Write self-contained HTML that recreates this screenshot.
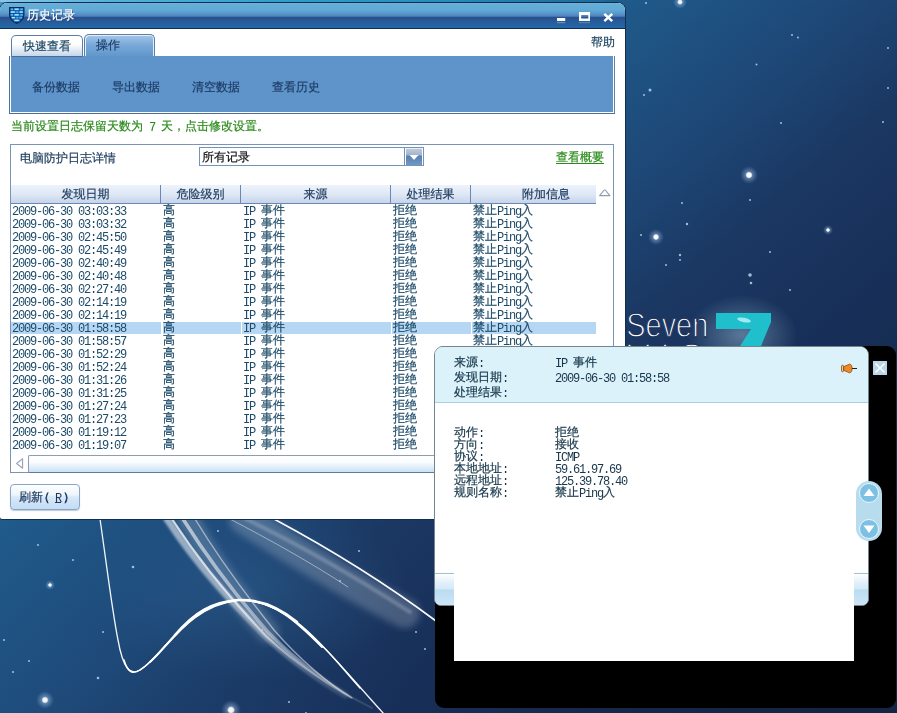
<!DOCTYPE html>
<html lang="zh-CN">
<head>
<meta charset="utf-8">
<title>历史记录</title>
<style>
html,body{margin:0;padding:0;}
body{width:897px;height:713px;overflow:hidden;position:relative;background:#1d4a78;font-family:"Liberation Sans","WenQuanYi Zen Hei","Noto Sans CJK SC",sans-serif;font-size:12px;line-height:13px;color:#1c4560;-webkit-text-stroke:0.2px;}
div,span{position:absolute;white-space:nowrap;}
#bg{left:0;top:0;width:897px;height:713px;background:radial-gradient(ellipse 420px 330px at 0% 100%,rgba(34,96,146,.28),rgba(34,96,146,0) 100%),radial-gradient(ellipse 160px 90px at 250px 590px,rgba(60,120,170,.28),rgba(60,120,170,0) 100%),linear-gradient(140deg,#4a90c0 0%,#2a6a9c 20%,#1f5a8a 36%,#1d4473 51%,#1b3863 58%,#172f58 70%,#15284a 84%,#142442 100%);}
/* ---------- main window ---------- */
#frame{left:-1px;top:2px;width:625px;height:516px;background:#fff;border:1px solid #102e50;border-radius:8px 8px 3px 3px;overflow:hidden;}
#title{left:0;top:3px;width:625px;height:25px;background:linear-gradient(#7ab4dc 0,#66aed8 1px,#60aad6 7px,#5a9acc 10px,#4f80b9 13.4px,#27508e 13.8px,#285a98 18px,#2268a8 25px);border-bottom:1px solid #102e50;border-radius:7px 7px 0 0;}
#title .t{left:27px;top:5px;color:#fff;font-size:12px;line-height:14px;text-shadow:1px 1px 0 rgba(16,48,96,.55);}
.m{position:relative;top:1px;-webkit-text-stroke:0;font-family:"Liberation Mono",monospace;letter-spacing:-1.2px;}
.tab{border:1px solid #5a7ea8;border-bottom:none;border-radius:5px 5px 0 0;line-height:20px;text-align:center;}
#tab1{left:11px;top:35px;width:70px;height:20px;z-index:2;border-bottom:1px solid #4b6e98;background:linear-gradient(#fff 0,#fff 8px,#c4d6ea 100%);color:#1c4560;}
#tab2{left:84px;top:34px;width:69px;height:23px;background:linear-gradient(#a6c6e8 0,#78a8d8 10px,#5e94ca 100%);color:#1c3f68;box-shadow:inset 1px 1px 0 #e4eef8,inset -1px 0 0 #e4eef8;text-align:left;text-indent:11px;}
#panel{left:9px;top:56px;width:602px;height:56px;border:1px solid #fff;border-top:none;box-shadow:-1px 0 0 #4b6e98,1px 0 0 #5f83ad,0 1px 0 #4b6e98,-1px 1px 0 #4b6e98,1px 1px 0 #4b6e98;margin:0 1px;background:#5e94ca;}
#panel>span{top:25px;color:#1e3d66;}
#help{left:591px;top:36px;}
#green{left:11px;top:120px;color:#2a8a1a;}
#grp{left:10px;top:144px;width:602px;height:380px;border:1px solid #7a94b4;border-bottom:none;}
#grpt{left:20px;top:152px;color:#1c3a5c;}
#combo{left:199px;top:147px;width:223px;height:17px;border:1px solid #7393b8;background:#fff;}
#combo>span{left:2px;top:3px;color:#111;}
#cbtn{left:204px;top:0;width:18px;height:17px;border-left:1px solid #6f8fb4;box-shadow:inset 1px 0 0 #fff,inset -1px 0 0 #fff,inset 0 1px 0 #e8eef6;background:linear-gradient(#c4cddc 0,#a2b4cd 7px,#5a80b0 8px,#7096c2 17px);}
#link{left:556px;top:151px;color:#2a8a1a;text-decoration:underline;text-underline-offset:2px;text-decoration-thickness:1px;}
#hdr{left:11px;top:185px;width:585px;height:18px;overflow:hidden;background:linear-gradient(#eef3fb,#dfe8f6 50%,#c6d4ea);border-bottom:1px solid #6a88b0;}
#hdr>span{top:3px;color:#1c3a5c;text-align:center;}
#hdr i{position:absolute;top:0;width:1px;height:19px;background:#6a88b0;}
.row{left:11px;width:585px;height:13px;color:#1c4a68;}
.row>span{top:0;line-height:13px;}
.c1{left:1px}.c2{left:152px}.c3{left:232px}.c4{left:382px}.c5{left:462px}
.sel b{position:absolute;top:1px;height:12px;background:#b5d7f3;}


#grp{height:327px;border-bottom:1px solid #7a94b4;}
#sth{left:28px;top:455px;width:600px;height:16px;border:1px solid #8f9db0;border-bottom-color:#5d7c9a;border-right:none;border-radius:2px 0 0 2px;background:linear-gradient(#fff 0,#fafcff 6px,#e2effb 11px,#cbe1f6 16px);}
#btn{left:10px;top:484px;width:68px;height:24px;border:1px solid #8aa6c6;border-radius:4px;background:linear-gradient(#fdfeff 0,#eef5fc 10px,#d8e8f8 12px,#c4dcf4 24px);box-shadow:0 1px 1px rgba(120,150,190,.5);}
#btn>span{left:8px;top:6px;color:#1c3a5c;}
#btn i{font-style:normal;display:inline-block;text-align:center;}
/* ---------- popup ---------- */
#black{left:435px;top:346px;width:461px;height:362px;background:#000;border-radius:9px;}
#white2{left:454px;top:590px;width:400px;height:71px;background:#fff;}
#pop{left:434px;top:346px;width:433px;height:258px;border:1px solid #76858c;border-radius:9px 9px 7px 7px;background:#fff;overflow:hidden;box-sizing:content-box;}
#pophd{left:0;top:0;width:433px;height:55px;background:#dbf2fb;border-bottom:1px solid #a9cfe0;}
#popft{left:0;top:226px;width:433px;height:32px;border-top:1px solid #9fbfd2;background:linear-gradient(#fff 0,#e4f1fa 8px,#d3e9f7 15px,#b9dcf2 16px,#cfe6f5 32px);}
#popin{left:19px;top:56px;width:400px;height:210px;background:#fff;}
.pt{color:#17364a;line-height:12px;}
#pill{left:856px;top:481px;width:26px;height:60px;border-radius:13px;background:#b7dcee;}
.cir{left:3px;width:18px;height:18px;border-radius:50%;border:1px solid #eaf6fc;background:#7cc0e4;}
#xbox{left:873px;top:361px;width:14px;height:14px;background:#b9d6e6;}
</style>
</head>
<body>
<div id="bg"><svg id="bgsvg" width="897" height="713" viewBox="0 0 897 713" style="position:absolute;left:0;top:0">
<defs>
<radialGradient id="gs"><stop offset="0" stop-color="#fff" stop-opacity="1"/><stop offset="0.25" stop-color="#fff" stop-opacity=".9"/><stop offset="0.4" stop-color="#cfe6ff" stop-opacity=".35"/><stop offset="1" stop-color="#9cc8f0" stop-opacity="0"/></radialGradient>
<radialGradient id="g7"><stop offset="0" stop-color="#8fb0c8" stop-opacity=".55"/><stop offset="1" stop-color="#8fb0c8" stop-opacity="0"/></radialGradient>
<linearGradient id="top2" x1="0" x2="1" y1="0" y2="0"><stop offset="0" stop-color="#84c6e8"/><stop offset=".12" stop-color="#58b0da"/><stop offset=".33" stop-color="#2e9ccc"/><stop offset=".5" stop-color="#2a8abc"/><stop offset=".67" stop-color="#1f6a9a"/><stop offset=".7" stop-color="#1f5e8e" stop-opacity="0"/></linearGradient>
<linearGradient id="band" x1="0" x2="1" y1="0" y2="1"><stop offset="0" stop-color="#fff" stop-opacity=".55"/><stop offset="1" stop-color="#fff" stop-opacity=".05"/></linearGradient>
<filter id="b1" x="-20%" y="-20%" width="140%" height="140%"><feGaussianBlur stdDeviation="1.2"/></filter><filter id="b3" x="-20%" y="-20%" width="140%" height="140%"><feGaussianBlur stdDeviation="3.5"/></filter><linearGradient id="fade" gradientUnits="userSpaceOnUse" x1="165" y1="519" x2="360" y2="705"><stop offset="0" stop-color="#fff" stop-opacity="1"/><stop offset=".45" stop-color="#fff" stop-opacity=".8"/><stop offset="1" stop-color="#fff" stop-opacity=".15"/></linearGradient></defs>
<rect x="0" y="0" width="897" height="2" fill="url(#top2)"/>
<g fill="none" stroke="#fff" stroke-linecap="round">
<path d="M100 519 C106 560 112 610 118 640 C123 668 130 676 140 670 C165 655 185 605 238 600 C290 598 330 655 384 714" stroke-width="1.3" opacity=".95"/>
<path d="M124 660 C128 674 134 674 140 670 C165 655 185 605 238 600 C290 598 330 655 360 688" stroke-width="1.5"/><path d="M150 662 C170 645 190 606 238 600 C275 599 300 625 322 647" stroke-width="2"/><path d="M175 635 C195 612 212 602 238 600 C260 599 280 608 297 622" stroke-width="2.5"/>
<path d="M167 519 C200 570 240 610 262 632 C290 660 320 680 345 695" stroke="url(#fade)" stroke-width="7" opacity=".55" filter="url(#b1)"/><path d="M188 519 C212 565 245 606 268 632" stroke-width="22" opacity=".18" filter="url(#b3)"/>
<path d="M172 519 C205 570 243 612 266 636 C300 668 340 692 372 708" stroke="url(#fade)" stroke-width="2.2" opacity=".75"/>
<path d="M183 519 C212 565 245 606 268 632 C295 660 325 682 350 697" stroke="url(#fade)" stroke-width="3.5" opacity=".6"/>
<path d="M195 519 C220 560 250 600 274 630 C300 660 330 685 352 698" stroke-width="1.4" opacity=".5"/>
<path d="M244 519 C290 548 340 580 405 613" stroke-width="30" opacity=".2" filter="url(#b3)"/>
<path d="M246 519 C300 545 360 580 410 612" stroke-width="4" opacity=".2" filter="url(#b1)"/>
<path d="M274 519 C330 549 385 583 436 621" stroke-width="1.7" opacity=".97"/><path d="M230 519 C270 540 310 562 348 587" stroke-width="1" opacity=".45"/>
</g>
<ellipse cx="742" cy="335" rx="55" ry="40" fill="url(#g7)"/>
<g fill="#b8d4ee" opacity=".85"><circle cx="38" cy="545" r="1"/><circle cx="73" cy="560" r="1"/><circle cx="50" cy="585" r="1.6"/><circle cx="133" cy="567" r="1.3"/><circle cx="103" cy="632" r="1"/><circle cx="29" cy="661" r="1"/><circle cx="13" cy="672" r="1"/><circle cx="98" cy="678" r="1.3"/><circle cx="218" cy="531" r="1"/><circle cx="262" cy="630" r="1"/><circle cx="289" cy="702" r="1"/><circle cx="340" cy="581" r="1"/><circle cx="359" cy="551" r="1"/><circle cx="416" cy="632" r="1"/><circle cx="425" cy="649" r="1"/><circle cx="646" cy="3" r="1"/><circle cx="792" cy="35" r="1"/><circle cx="798" cy="37.5" r="1"/><circle cx="756.5" cy="64.6" r="1"/><circle cx="650" cy="90" r="1.5"/><circle cx="644" cy="95" r="1"/><circle cx="888" cy="48" r="1"/><circle cx="888" cy="88" r="1"/><circle cx="781" cy="123" r="1"/><circle cx="883" cy="122" r="1"/><circle cx="749" cy="175" r="2.6"/><circle cx="750" cy="200" r="1"/><circle cx="682" cy="203" r="1"/><circle cx="687" cy="224" r="1.2"/><circle cx="641" cy="235" r="1"/><circle cx="656" cy="237" r="2.4"/><circle cx="680" cy="255" r="1.2"/><circle cx="680" cy="260" r="1"/><circle cx="666" cy="265" r="1"/><circle cx="828" cy="230" r="1.6"/><circle cx="770" cy="252" r="1"/><circle cx="750" cy="275" r="1.8"/><circle cx="751" cy="283" r="1.3"/><circle cx="790" cy="290" r="1"/><circle cx="4" cy="640" r="1"/><circle cx="306" cy="713" r="1"/></g>
<circle cx="680" cy="2" r="7" fill="url(#gs)"/><circle cx="749" cy="175" r="9" fill="url(#gs)"/><circle cx="656" cy="237" r="8" fill="url(#gs)"/><circle cx="45" cy="700" r="9" fill="url(#gs)"/><circle cx="231" cy="710" r="10" fill="url(#gs)"/><circle cx="50" cy="585" r="5" fill="url(#gs)"/><circle cx="828" cy="230" r="5" fill="url(#gs)"/>
<polygon points="716,313 771,313 771,322 761,346 740,346 751,329 716,329" fill="#1fbfcc"/>
<ellipse cx="744" cy="320" rx="7" ry="2.2" fill="#9eeaf0" transform="rotate(12 744 320)"/>
<text x="626.3" y="336.8" font-family="'Liberation Sans',sans-serif" font-size="35.5" fill="#fff" stroke="#1a3560" stroke-width="1.3" textLength="82" lengthAdjust="spacingAndGlyphs">Seven</text>
<text x="627" y="367.5" font-family="'Liberation Sans',sans-serif" font-size="34.5" fill="#fff" stroke="#1a3560" stroke-width="1.3" textLength="76" lengthAdjust="spacing">VIS</text>
</svg></div>
<div id="frame"></div>
<div id="win" style="left:0;top:0;will-change:transform">
  <div id="title"><span class="t">历史记录</span></div>
  <div id="tab1" class="tab">快速查看</div>
  <div id="tab2" class="tab">操作</div>
  <div id="help">帮助</div>
  <div id="panel"><span style="left:21px">备份数据</span><span style="left:101px">导出数据</span><span style="left:181px">清空数据</span><span style="left:261px">查看历史</span></div>
  <div id="green">当前设置日志保留天数为<span class="m"> 7 </span>天，点击修改设置。</div>
  <div id="grp"></div>
  <div id="grpt">电脑防护日志详情</div>
  <div id="combo"><span>所有记录</span><div id="cbtn"><svg width="18" height="17" viewBox="0 0 18 17" style="position:absolute;left:0;top:0"><polygon points="4.5,7 13.5,7 9,12" fill="#fff"/></svg></div></div>
  <div id="link">查看概要</div>
  <div id="hdr"><span style="left:0;width:149px">发现日期</span><i style="left:149px"></i><span style="left:150px;width:79px">危险级别</span><i style="left:229px"></i><span style="left:230px;width:149px">来源</span><i style="left:379px"></i><span style="left:380px;width:79px">处理结果</span><i style="left:459px"></i><span style="left:460px;width:150px">附加信息</span></div>

  <svg style="position:absolute;left:15px;top:456px" width="10" height="14" viewBox="15 456 10 14"><path d="M22.6 458.8 L16.6 463.5 L22.6 468.2 Z" fill="#fdfeff" stroke="#9aa4b4" stroke-width="1.1" stroke-linejoin="round"/></svg>
  <div id="sth"></div>
  <svg style="position:absolute;left:598px;top:187px" width="14" height="10" viewBox="598 187 14 10"><path d="M599.6 195.6 L604.2 190 L605.3 190 L609.9 195.6 Z" fill="#fdfeff" stroke="#8f9bb0" stroke-width="1.1" stroke-linejoin="round"/></svg>
  <div id="btn"><span>刷新</span><span style="left:27px;-webkit-text-stroke:.6px">（</span><span style="left:44px;text-decoration:underline"><span class="m">R</span></span><span style="left:52px;-webkit-text-stroke:.6px">）</span></div>
  <svg id="shield" style="position:absolute;left:8px;top:6px" width="18" height="19" viewBox="8 6 18 19">
   <path d="M9.6 7.6 L23.9 7.6 L23.9 15 Q23.6 20.5 16.75 23.4 Q9.9 20.5 9.6 15 Z" fill="#14509a" stroke="#0d2b52" stroke-width="1.2" stroke-linejoin="round"/>
   <g fill="#48b4f6"><rect x="10.6" y="8.4" width="2.6" height="1.8"/><rect x="14.1" y="8.4" width="5.2" height="1.8"/><rect x="20.2" y="8.4" width="2.8" height="1.8"/>
   <rect x="10.4" y="11.2" width="5" height="1.8"/><rect x="16.2" y="11.2" width="2.2" height="1.8"/><rect x="19.2" y="11.2" width="3.9" height="1.8"/>
   <rect x="10.6" y="14" width="2.6" height="1.8"/><rect x="14.1" y="14" width="5.2" height="1.8"/><rect x="20.2" y="14" width="2.7" height="1.8"/>
   <rect x="11.4" y="16.8" width="4" height="1.8"/><rect x="16.2" y="16.8" width="2.2" height="1.8"/><rect x="19.2" y="16.8" width="3" height="1.8"/>
   <rect x="13.8" y="19.6" width="5.8" height="1.8"/></g>
   <g fill="#b4e8ff"><rect x="15" y="8.6" width="3.4" height="1.2"/><rect x="11" y="11.4" width="3.6" height="1.2"/><rect x="20" y="11.4" width="2.6" height="1.2"/><rect x="15" y="14.2" width="3.4" height="1.2"/><rect x="12" y="17" width="2.8" height="1.2"/><rect x="14.8" y="19.8" width="3.8" height="1.2"/></g>
  </svg>
  <svg id="tbtn" style="position:absolute;left:555px;top:10px" width="62" height="16" viewBox="555 10 62 16">
   <rect x="557" y="18" width="8.2" height="3" fill="#fff"/><rect x="557" y="22" width="8.2" height="1.2" fill="#fff" opacity=".3"/>
   <path fill-rule="evenodd" d="M579 12 H590 V21 H579 Z M581.2 15 V18.6 H588.3 V15 Z" fill="#fff"/><rect x="579" y="22" width="11" height="1.2" fill="#fff" opacity=".22"/>
   <path d="M604.3 13.8 L612.2 21.2 M612.2 13.8 L604.3 21.2" stroke="#fff" stroke-width="2.5" fill="none"/>
  </svg>
  <div id="rows" style="left:0;top:0">
<div class="row" style="top:204px"><span class="c1"><span class="m">2009-06-30 03:03:33</span></span><span class="c2">高</span><span class="c3"><span class="m">IP </span>事件</span><span class="c4">拒绝</span><span class="c5">禁止<span class="m">Ping</span>入</span></div>
<div class="row" style="top:217px"><span class="c1"><span class="m">2009-06-30 03:03:32</span></span><span class="c2">高</span><span class="c3"><span class="m">IP </span>事件</span><span class="c4">拒绝</span><span class="c5">禁止<span class="m">Ping</span>入</span></div>
<div class="row" style="top:230px"><span class="c1"><span class="m">2009-06-30 02:45:50</span></span><span class="c2">高</span><span class="c3"><span class="m">IP </span>事件</span><span class="c4">拒绝</span><span class="c5">禁止<span class="m">Ping</span>入</span></div>
<div class="row" style="top:243px"><span class="c1"><span class="m">2009-06-30 02:45:49</span></span><span class="c2">高</span><span class="c3"><span class="m">IP </span>事件</span><span class="c4">拒绝</span><span class="c5">禁止<span class="m">Ping</span>入</span></div>
<div class="row" style="top:256px"><span class="c1"><span class="m">2009-06-30 02:40:49</span></span><span class="c2">高</span><span class="c3"><span class="m">IP </span>事件</span><span class="c4">拒绝</span><span class="c5">禁止<span class="m">Ping</span>入</span></div>
<div class="row" style="top:269px"><span class="c1"><span class="m">2009-06-30 02:40:48</span></span><span class="c2">高</span><span class="c3"><span class="m">IP </span>事件</span><span class="c4">拒绝</span><span class="c5">禁止<span class="m">Ping</span>入</span></div>
<div class="row" style="top:282px"><span class="c1"><span class="m">2009-06-30 02:27:40</span></span><span class="c2">高</span><span class="c3"><span class="m">IP </span>事件</span><span class="c4">拒绝</span><span class="c5">禁止<span class="m">Ping</span>入</span></div>
<div class="row" style="top:295px"><span class="c1"><span class="m">2009-06-30 02:14:19</span></span><span class="c2">高</span><span class="c3"><span class="m">IP </span>事件</span><span class="c4">拒绝</span><span class="c5">禁止<span class="m">Ping</span>入</span></div>
<div class="row" style="top:308px"><span class="c1"><span class="m">2009-06-30 02:14:19</span></span><span class="c2">高</span><span class="c3"><span class="m">IP </span>事件</span><span class="c4">拒绝</span><span class="c5">禁止<span class="m">Ping</span>入</span></div>
<div class="row sel" style="top:321px"><b style="left:0;width:150px"></b><b style="left:152px;width:78px"></b><b style="left:231px;width:149px"></b><b style="left:381px;width:79px"></b><b style="left:461px;width:124px"></b><span class="c1"><span class="m">2009-06-30 01:58:58</span></span><span class="c2">高</span><span class="c3"><span class="m">IP </span>事件</span><span class="c4">拒绝</span><span class="c5">禁止<span class="m">Ping</span>入</span></div>
<div class="row" style="top:334px"><span class="c1"><span class="m">2009-06-30 01:58:57</span></span><span class="c2">高</span><span class="c3"><span class="m">IP </span>事件</span><span class="c4">拒绝</span><span class="c5">禁止<span class="m">Ping</span>入</span></div>
<div class="row" style="top:347px"><span class="c1"><span class="m">2009-06-30 01:52:29</span></span><span class="c2">高</span><span class="c3"><span class="m">IP </span>事件</span><span class="c4">拒绝</span><span class="c5">禁止<span class="m">Ping</span>入</span></div>
<div class="row" style="top:360px"><span class="c1"><span class="m">2009-06-30 01:52:24</span></span><span class="c2">高</span><span class="c3"><span class="m">IP </span>事件</span><span class="c4">拒绝</span><span class="c5">禁止<span class="m">Ping</span>入</span></div>
<div class="row" style="top:373px"><span class="c1"><span class="m">2009-06-30 01:31:26</span></span><span class="c2">高</span><span class="c3"><span class="m">IP </span>事件</span><span class="c4">拒绝</span><span class="c5">禁止<span class="m">Ping</span>入</span></div>
<div class="row" style="top:386px"><span class="c1"><span class="m">2009-06-30 01:31:25</span></span><span class="c2">高</span><span class="c3"><span class="m">IP </span>事件</span><span class="c4">拒绝</span><span class="c5">禁止<span class="m">Ping</span>入</span></div>
<div class="row" style="top:399px"><span class="c1"><span class="m">2009-06-30 01:27:24</span></span><span class="c2">高</span><span class="c3"><span class="m">IP </span>事件</span><span class="c4">拒绝</span><span class="c5">禁止<span class="m">Ping</span>入</span></div>
<div class="row" style="top:412px"><span class="c1"><span class="m">2009-06-30 01:27:23</span></span><span class="c2">高</span><span class="c3"><span class="m">IP </span>事件</span><span class="c4">拒绝</span><span class="c5">禁止<span class="m">Ping</span>入</span></div>
<div class="row" style="top:425px"><span class="c1"><span class="m">2009-06-30 01:19:12</span></span><span class="c2">高</span><span class="c3"><span class="m">IP </span>事件</span><span class="c4">拒绝</span><span class="c5">禁止<span class="m">Ping</span>入</span></div>
<div class="row" style="top:438px"><span class="c1"><span class="m">2009-06-30 01:19:07</span></span><span class="c2">高</span><span class="c3"><span class="m">IP </span>事件</span><span class="c4">拒绝</span><span class="c5">禁止<span class="m">Ping</span>入</span></div>
  </div>
</div>

<div id="black"></div>
<div id="pop"><div id="pophd"></div><div id="popft"></div><div id="popin"></div></div>
<div id="white2"></div>
<div id="poptext" style="left:0;top:0;will-change:transform"><span class="pt" style="left:454px;top:356px">来源<span class="m">:</span></span><span class="pt" style="left:454px;top:371px">发现日期<span class="m">:</span></span><span class="pt" style="left:454px;top:386px">处理结果<span class="m">:</span></span><span class="pt" style="left:454px;top:426px">动作<span class="m">:</span></span><span class="pt" style="left:454px;top:438px">方向<span class="m">:</span></span><span class="pt" style="left:454px;top:450px">协议<span class="m">:</span></span><span class="pt" style="left:454px;top:462px">本地地址<span class="m">:</span></span><span class="pt" style="left:454px;top:474px">远程地址<span class="m">:</span></span><span class="pt" style="left:454px;top:486px">规则名称<span class="m">:</span></span><span class="pt" style="left:555px;top:356px"><span class="m">IP </span>事件</span><span class="pt" style="left:555px;top:371px"><span class="m">2009-06-30 01:58:58</span></span><span class="pt" style="left:555px;top:426px">拒绝</span><span class="pt" style="left:555px;top:438px">接收</span><span class="pt" style="left:555px;top:450px"><span class="m">ICMP</span></span><span class="pt" style="left:555px;top:462px"><span class="m">59.61.97.69</span></span><span class="pt" style="left:555px;top:474px"><span class="m">125.39.78.40</span></span><span class="pt" style="left:555px;top:486px">禁止<span class="m">Ping</span>入</span></div>
<svg style="position:absolute;left:840px;top:363px" width="18" height="11" viewBox="0 0 18 11"><path d="M1.5 3.2 C1.5 1.8 3.5 1.8 3.5 3.2 L3.5 7.8 C3.5 9.2 1.5 9.2 1.5 7.8 Z" fill="#f7c98a" stroke="#8a4a10" stroke-width=".8"/><path d="M3.8 3.6 L9.5 1.2 C11.5 1.2 12 3 12 5.5 C12 8 11.5 9.8 9.5 9.8 L3.8 7.4 Z" fill="#f08a28" stroke="#8a4a10" stroke-width=".8"/><path d="M12 5.5 L17 5.5" stroke="#222" stroke-width="1"/></svg>
<div id="xbox"><svg width="14" height="14" viewBox="0 0 14 14" style="position:absolute;left:0;top:0"><path d="M2.5 2.5 L11.5 11.5 M11.5 2.5 L2.5 11.5" stroke="#fff" stroke-width="1.6" fill="none"/></svg></div>
<div id="pill"><div class="cir" style="top:2px"></div><div class="cir" style="top:38px"></div>
<svg width="26" height="60" viewBox="0 0 26 60" style="position:absolute;left:0;top:0"><polygon points="13,7.5 18.5,15 7.5,15" fill="#fff"/><polygon points="7.5,44.5 18.5,44.5 13,52" fill="#fff"/></svg></div>
</body>
</html>
